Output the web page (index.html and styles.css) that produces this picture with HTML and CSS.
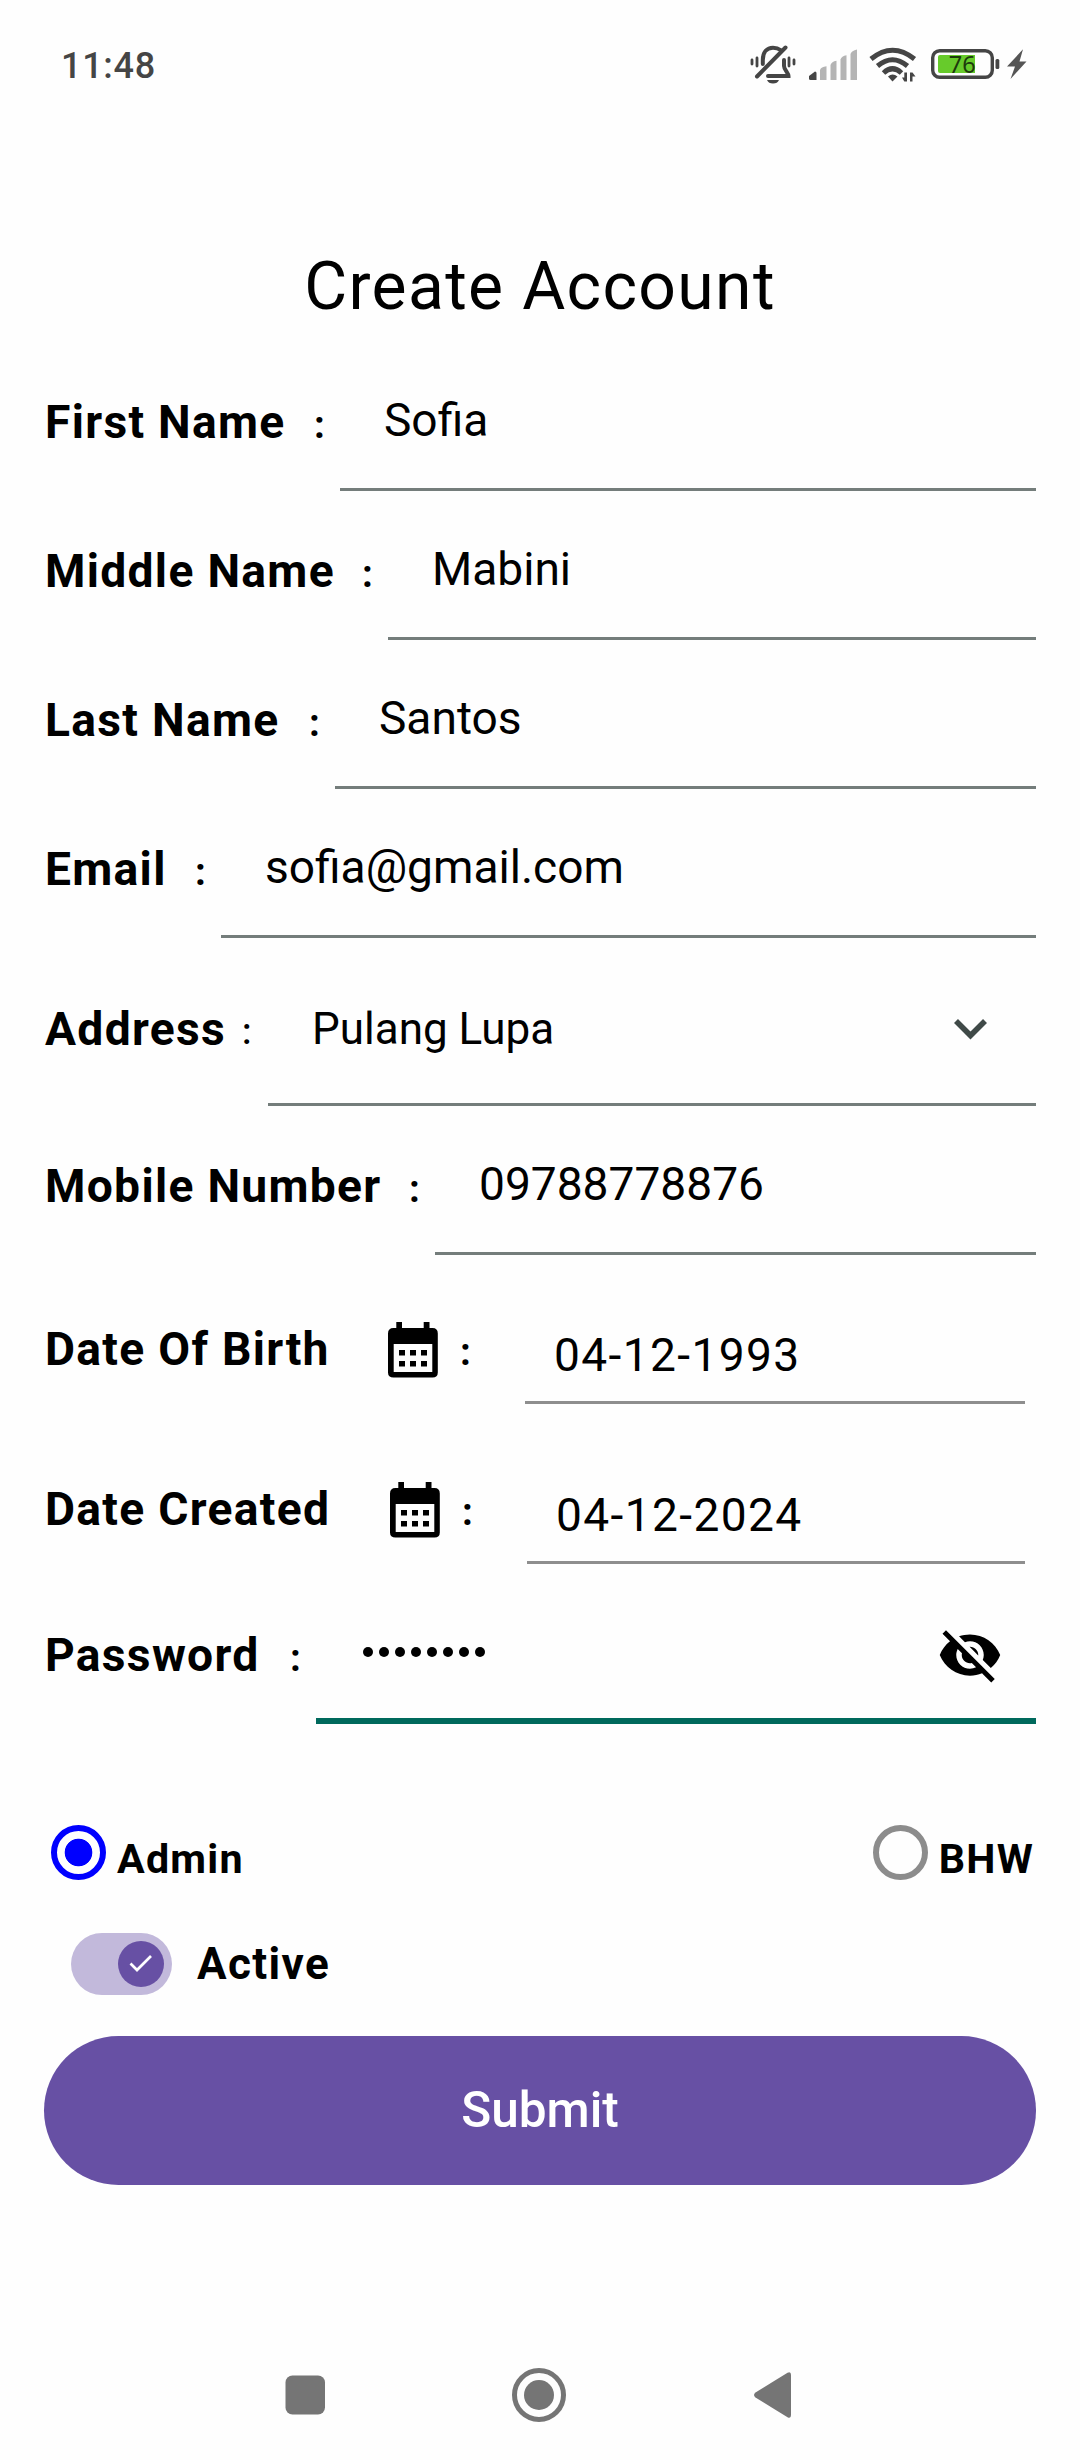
FILE: index.html
```html
<!DOCTYPE html>
<html lang="en">
<head>
<meta charset="utf-8">
<title>Create Account</title>
<link rel="stylesheet" href="styles.css">
</head>
<body>
<div class="screen">
  <header class="status-bar">
    <span class="clock">11:48</span>
    <svg class="status-icons" width="320" height="70" viewBox="0 0 320 70">
      <g fill="none" stroke="#454545" stroke-width="4" stroke-linecap="round">
        <path d="M32.800 34V30C32.800 22 37 17.800 43 17.800C46 17.800 48.500 18.500 50.500 20"/>
        <path d="M55.500 17.500L27 46.500"/>
        <path d="M54 30V36C54 39.500 58.500 43 58.500 46H38"/>
        <path d="M27 28V36M22 30V34M59 28V36M64 30V34" stroke-width="2.800"/>
      </g>
      <path d="M37 50H49Q47.500 53.500 43 53.500Q38.500 53.500 37 50Z" fill="#454545"/>
      <path d="M79 48.500V46L85 41.500Q86.500 41.500 86.500 43V50H80.500Q79 50 79 48.500Z" fill="#454545"/>
      <g fill="#b4b4b4">
        <path d="M90 40Q91 37 96.500 36.300V50H90Z"/><path d="M100.500 35Q101.500 31.500 106.500 30.800V50H100.500Z"/><path d="M110.500 29.500Q111.500 26 116.500 25.200V50H110.500Z"/><path d="M120.500 24Q121.500 20.500 127 19.500V50H120.500Z"/>
      </g>
      <g fill="none" stroke="#454545" stroke-width="5">
        <path d="M141 29Q162.500 11.500 184.500 29"/><path d="M147.500 36Q162.500 23.500 177.500 36"/><path d="M153.500 43Q162.500 34.500 171.500 43"/>
      </g>
      <path d="M158 46.500Q162.500 42.500 167.500 46.500L162.500 51.500Z" fill="#454545"/>
      <path d="M174.300 42.500V51.500H177V42.500ZM172 47.500H174.300V51.500ZM180 42.500V51.500H182.500V42.500ZM182.500 42.500L185.500 46.500H182.500Z" fill="#454545"/>
      <rect x="202.700" y="20.700" width="59.600" height="26.600" rx="7" fill="none" stroke="#454545" stroke-width="3.400"/>
      <path d="M210 25H245V43H210Q208 43 208 41V27Q208 25 210 25Z" fill="#67cb2b"/>
      <text x="232.300" y="42.500" text-anchor="middle" class="battery-level">76</text>
      <rect x="265.500" y="29" width="3.800" height="10" rx="1.500" fill="#454545"/>
      <path d="M293 19.300L277 36.400H285L280.500 49L296.500 31.500H289.500Z" fill="#555"/>
    </svg>
  </header>

  <h1 class="title">Create Account</h1>

  <form class="form">
    <div class="row">
      <label class="label label-first">First Name<span class="colon">:</span></label>
      <div class="field">Sofia</div>
    </div>
    <div class="row">
      <label class="label label-middle">Middle Name<span class="colon">:</span></label>
      <div class="field">Mabini</div>
    </div>
    <div class="row">
      <label class="label label-last">Last Name<span class="colon">:</span></label>
      <div class="field">Santos</div>
    </div>
    <div class="row">
      <label class="label label-email">Email<span class="colon">:</span></label>
      <div class="field">sofia@gmail.com</div>
    </div>
    <div class="row row-select">
      <label class="label label-address">Address<span class="colon colon-thin">:</span></label>
      <div class="field">Pulang Lupa
        <svg class="chevron" width="33" height="21" viewBox="0 0 33 21"><path d="M2 2L16.500 16.500L31 2" fill="none" stroke="#3f4947" stroke-width="5.600"/></svg>
      </div>
    </div>
    <div class="row">
      <label class="label label-mobile">Mobile Number<span class="colon">:</span></label>
      <div class="field">09788778876</div>
    </div>
    <div class="row row-date">
      <label class="label label-birth">Date Of Birth
        <svg class="calendar" width="50" height="56" viewBox="0 0 50 56"><path fill-rule="evenodd" d="M8.300 0H14V6H35.700V0H41.500V6H44.500Q49.800 6 49.800 11.500V50.500Q49.800 55.600 44.500 55.600H5.500Q0 55.600 0 50.500V11.500Q0 6 5.500 6H8.300ZM5.700 22V50H44.300V22Z"/><path d="M11 28H17V33.500H11ZM22 28H28V33.500H22ZM33 28H39V33.500H33ZM11 39H17V44.500H11ZM22 39H28V44.500H22ZM33 39H39V44.500H33Z"/></svg>
        <span class="colon">:</span></label>
      <div class="field">04-12-1993</div>
    </div>
    <div class="row row-date">
      <label class="label label-created">Date Created
        <svg class="calendar" width="50" height="56" viewBox="0 0 50 56"><path fill-rule="evenodd" d="M8.300 0H14V6H35.700V0H41.500V6H44.500Q49.800 6 49.800 11.500V50.500Q49.800 55.600 44.500 55.600H5.500Q0 55.600 0 50.500V11.500Q0 6 5.500 6H8.300ZM5.700 22V50H44.300V22Z"/><path d="M11 28H17V33.500H11ZM22 28H28V33.500H22ZM33 28H39V33.500H33ZM11 39H17V44.500H11ZM22 39H28V44.500H22ZM33 39H39V44.500H33Z"/></svg>
        <span class="colon">:</span></label>
      <div class="field">04-12-2024</div>
    </div>
    <div class="row">
      <label class="label label-password">Password<span class="colon">:</span></label>
      <div class="field field-focus">
        <span class="dots"><i></i><i></i><i></i><i></i><i></i><i></i><i></i><i></i></span>
        <svg class="eye" width="66" height="66" viewBox="0 0 24 24"><path d="M12 7c2.760 0 5 2.240 5 5 0 .65-.13 1.260-.36 1.830l2.920 2.920c1.510-1.260 2.700-2.890 3.430-4.750-1.730-4.390-6-7.500-11-7.500-1.400 0-2.740.25-3.980.7l2.160 2.160C10.740 7.130 11.350 7 12 7zM2 4.270l2.280 2.280.46.460C3.080 8.300 1.780 10.020 1 12c1.730 4.390 6 7.500 11 7.500 1.550 0 3.030-.3 4.380-.84l.42.42L19.730 22 21 20.730 3.270 3 2 4.270zM7.530 9.800l1.550 1.550c-.05.21-.08.43-.08.650 0 1.660 1.340 3 3 3 .22 0 .44-.03.650-.08l1.550 1.550c-.67.33-1.410.53-2.200.53-2.760 0-5-2.240-5-5 0-.79.2-1.530.53-2.200zm4.310-.78l3.150 3.150.02-.16c0-1.660-1.340-3-3-3l-.17.010z"/></svg>
      </div>
    </div>

    <div class="roles">
      <label class="role"><span class="radio radio-on"></span>Admin</label>
      <label class="role"><span class="radio"></span>BHW</label>
    </div>
    <label class="active">
      <span class="switch"><span class="thumb"><svg width="24" height="20" viewBox="0 0 24 20"><path d="M1.500 9.500L8 16L22 2" fill="none" stroke="#fff" stroke-width="2.700"/></svg></span></span>Active
    </label>
    <button class="submit" type="button">Submit</button>
  </form>

  <nav class="nav-bar">
    <svg width="510" height="60" viewBox="0 0 510 60" fill="#757575">
      <rect x="0.500" y="10.500" width="39.500" height="39" rx="7"/>
      <circle cx="254" cy="30" r="24.500" fill="none" stroke="#757575" stroke-width="5"/>
      <circle cx="254" cy="30" r="15"/>
      <path d="M470.500 27.500L502.500 7.800Q506 6 506 10V50Q506 54 502.500 52.200L470.500 32.500Q467.500 30 470.500 27.500Z"/>
    </svg>
  </nav>
</div>
</body>
</html>
```
FILE: styles.css
```css
* { box-sizing: border-box; }
body {
  margin: 0;
  background: #fefefe;
  color: #000;
  font-family: Roboto, "Liberation Sans", sans-serif;
}
.screen {
  display: flex;
  flex-direction: column;
  width: 1080px;
  height: 2460px;
}
.status-bar {
  display: flex;
  justify-content: space-between;
  height: 100px;
  padding: 30px 30px 0 61px;
}
.clock {
  padding-top: 1px;
  font-size: 36px;
  font-weight: 500;
  line-height: 70px;
  letter-spacing: 0.700px;
  color: #454545;
}
.battery-level {
  font: 400 23.500px "Noto Sans", sans-serif;
  fill: #1d3b0c;
}
.title {
  margin: 147px 0 0;
  height: 95px;
  font-size: 66px;
  font-weight: 400;
  line-height: 80px;
  letter-spacing: 1.350px;
  text-align: center;
}
.form {
  display: flex;
  flex-direction: column;
  padding: 0 44px;
}
.row {
  display: flex;
  height: 149px;
}
.row-select { height: 168px; }
.row-date { height: 160px; padding-right: 11px; }
.label {
  display: flex;
  flex: none;
  padding: 52px 16px 0 1px;
  font-size: 46.200px;
  font-weight: 700;
  line-height: 56px;
  letter-spacing: 1.300px;
  white-space: nowrap;
}
.label-first { width: 296px; }
.label-middle { width: 344px; }
.label-last { width: 291px; }
.label-email { width: 177px; }
.label-address { width: 224px; }
.label-mobile { width: 391px; }
.label-birth { width: 481px; }
.label-created { width: 483px; }
.label-password { width: 272px; }
.row-select .label { padding-top: 63px; }
.row-date .label { padding-top: 66px; padding-right: 55px; }
.colon {
  width: 10px;
  margin-left: auto;
  padding-top: 3px;
  font-size: 38.500px;
  letter-spacing: 0;
}
.colon-thin {
  font-size: 36px;
  font-weight: 500;
}
.calendar { margin: 1px 0 0 auto; }
.row-date .colon { margin-left: 22px; }
.field {
  display: flex;
  flex: 1;
  justify-content: space-between;
  padding: 50px 44px 0;
  border-bottom: 3px solid #747d7b;
  font-size: 46.100px;
  line-height: 56px;
}
.row-select .field { padding-top: 63px; font-size: 44px; }
.row-date .field {
  height: 149px;
  padding: 72px 29px 0;
  border-bottom-color: #8e8e8e;
  letter-spacing: 1.380px;
}
.chevron { margin: 18px 5px 0 0; }
.field-focus { border-bottom: 6px solid #00695c; }
.dots {
  display: flex;
  gap: 6px;
  padding: 22px 0 0 3px;
}
.dots i {
  width: 10px;
  height: 10px;
  border-radius: 50%;
  background: #000;
}
.eye { margin: -3px -11px 0 0; }
.roles {
  display: flex;
  justify-content: space-between;
  margin-top: 101px;
  padding: 0 2px 0 7px;
}
.role {
  display: flex;
  gap: 11px;
  font-size: 41.250px;
  font-weight: 700;
  line-height: 68px;
  letter-spacing: 1.200px;
}
.radio {
  width: 55px;
  height: 55px;
  border: 6px solid #8c8c8c;
  border-radius: 50%;
}
.radio-on {
  border-color: #00f;
  background: radial-gradient(circle, #00f 13.400px, transparent 14.200px);
}
.active {
  display: flex;
  gap: 25px;
  margin-top: 40px;
  padding-left: 27px;
  font-size: 44px;
  font-weight: 700;
  line-height: 62px;
  letter-spacing: 1.380px;
}
.switch {
  display: flex;
  align-items: center;
  justify-content: flex-end;
  width: 101px;
  height: 62px;
  padding-right: 8px;
  border-radius: 31px;
  background: #c2b9db;
}
.thumb {
  display: flex;
  align-items: center;
  justify-content: center;
  width: 46px;
  height: 46px;
  border-radius: 50%;
  background: #6750a4;
}
.submit {
  height: 149px;
  margin-top: 41px;
  padding-bottom: 3px;
  border: 0;
  border-radius: 75px;
  background: #6750a4;
  color: #fff;
  font: 500 49.500px Roboto, sans-serif;
}
.nav-bar {
  display: flex;
  padding: 180px 0 0 285px;
}
```
